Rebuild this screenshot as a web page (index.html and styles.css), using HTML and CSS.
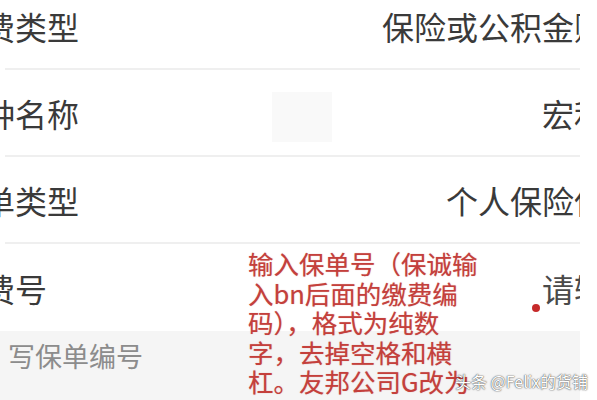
FILE: index.html
```html
<!DOCTYPE html>
<html lang="zh-CN">
<head>
<meta charset="UTF-8" />
<meta name="viewport" content="width=device-width, initial-scale=1" />
<title>保单信息</title>
<link rel="stylesheet" href="styles.css">
</head>
<body>

<div class="screen">
  <div class="list">
    <div class="row">
      <span class="label">缴费类型</span>
      <span class="value">保险或公积金账户</span>
    </div>
    <div class="row">
      <span class="label">险种名称</span>
      <span class="value">宏利人</span>
    </div>
    <div class="row">
      <span class="label">保单类型</span>
      <span class="value">个人保险保单</span>
    </div>
    <div class="row last">
      <span class="label">保费号</span>
      <span class="value">请输入</span>
    </div>
  </div>
  <div class="hint">写保单编号</div>

  <!-- redacted block -->
  <div class="blur"></div>

  <!-- red note pasted over the form -->
  <div class="note">输入保单号（保诚输入bn后面的缴费编码），格式为纯数字，去掉空格和横杠。友邦公司G改为</div>
  <span class="dot"></span>
</div>

<div class="mark">头条 @Felix的货铺</div>

</body>
</html>
```

FILE: styles.css
```css
body {
  margin: 0; background: #fff;
  font-family: "Noto Sans CJK SC", "Noto Sans", sans-serif;
  position: relative; height: 400px; overflow: hidden;
}
.screen {
  width: 580px; height: 400px; overflow: hidden;
  position: relative; background: #fff;
}
.list {
  margin-top: -17px;
}
.row {
  display: flex; align-items: center; justify-content: space-between;
  height: 85px; margin: 0 -58px 0 5px;
  border-bottom: 2px solid #efefef;
  font-size: 32px; line-height: 1; color: #3a3a3a;
  white-space: nowrap;
}
.row.last {
  height: 87px; border-bottom: none;
}
.label {
  margin-left: -54px; flex-shrink: 0;
}
.value {
  flex-shrink: 0;
}
.row.last .value {
  color: #4a4a4a;
}
.hint {
  background: #f5f5f5; height: 100px;
  padding: 11px 0 0 8px; box-sizing: border-box;
  font-size: 27px; line-height: 1; color: #8c8c8c;
  white-space: nowrap;
}
.blur {
  position: absolute; left: 272px; top: 92px;
  width: 60px; height: 50px; background: #f9f9f9;
}
.note {
  position: absolute; left: 248px; top: 248px; width: 232px;
  font-size: 25.5px; line-height: 29.5px; color: #c4403c;
  text-shadow: 0 0 1px rgba(196, 64, 60, .5);
}
.dot {
  position: absolute; left: 532px; top: 304px;
  width: 8px; height: 8px; border-radius: 50%; background: #c62a2a;
}
.mark {
  position: absolute; left: 455px; top: 370px;
  font-size: 16px; line-height: 22px; color: #fff; white-space: nowrap;
  text-shadow: 0 0 1px #333, 0 0 2px rgba(0,0,0,.5);
}
```
